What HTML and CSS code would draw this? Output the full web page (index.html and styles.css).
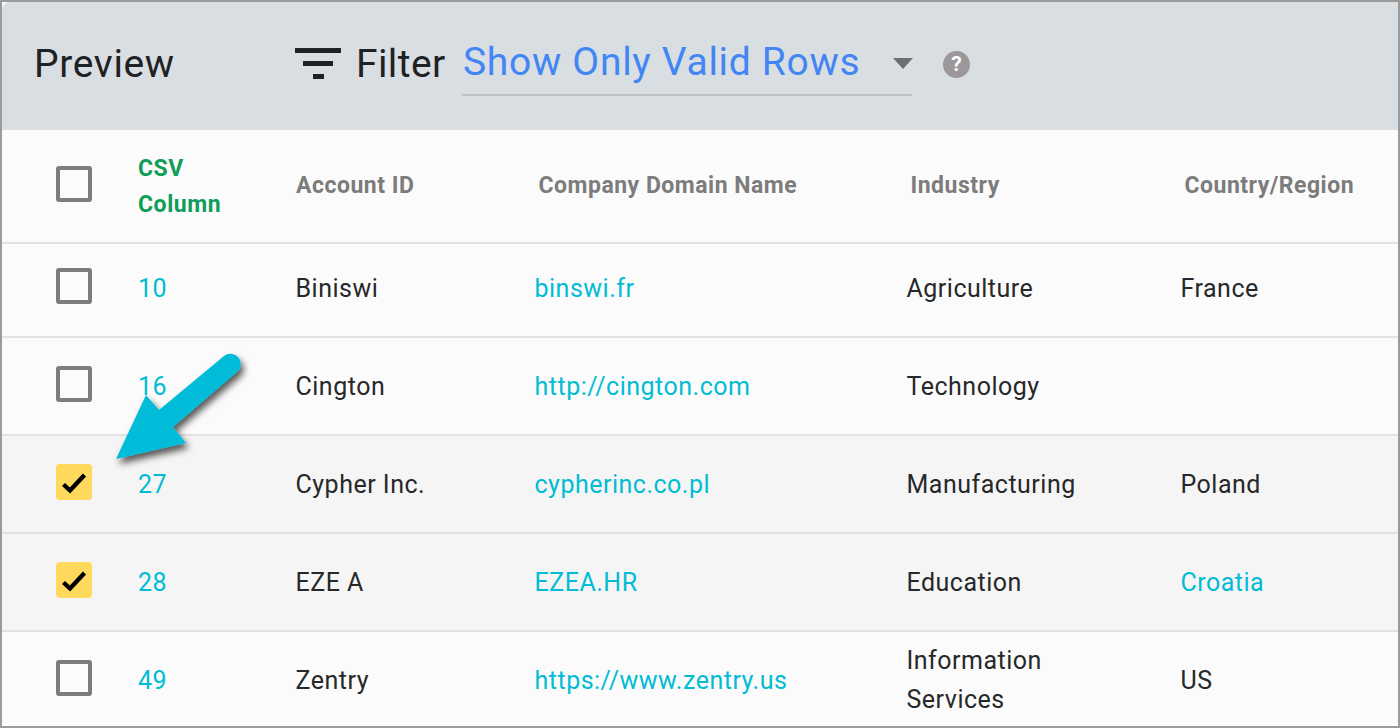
FILE: index.html
```html
<!DOCTYPE html>
<html lang="en">
<head>
<meta charset="utf-8">
<title>Preview</title>
<link rel="stylesheet" href="styles.css">
</head>
<body>
<div class="frame">
  <header class="toolbar">
    <h1 class="title">Preview</h1>
    <svg class="filter-icon" viewBox="0 0 46 32" aria-hidden="true"><path d="M0 0h46v5H0zM8 13h30v5H8zM18 26h11v5H18z"/></svg>
    <span class="filter-label">Filter</span>
    <div class="select">
      <span class="select-value">Show Only Valid Rows</span>
      <span class="caret"></span>
    </div>
    <span class="help">?</span>
  </header>
  <div class="table">
    <div class="row head">
      <div class="cell"><span class="box"></span></div>
      <div class="cell csv">CSV<br>Column</div>
      <div class="cell th first">Account ID</div>
      <div class="cell th">Company Domain Name</div>
      <div class="cell th">Industry</div>
      <div class="cell th">Country/Region</div>
    </div>
    <div class="row r1">
      <div class="cell"><span class="box"></span></div>
      <div class="cell link">10</div>
      <div class="cell">Biniswi</div>
      <div class="cell link">binswi.fr</div>
      <div class="cell">Agriculture</div>
      <div class="cell">France</div>
    </div>
    <div class="row r2">
      <div class="cell"><span class="box"></span></div>
      <div class="cell link">16</div>
      <div class="cell">Cington</div>
      <div class="cell link">http://cington.com</div>
      <div class="cell">Technology</div>
      <div class="cell"></div>
    </div>
    <div class="row r2 selected">
      <div class="cell"><span class="box checked"><svg viewBox="0 0 36 36" aria-hidden="true"><path d="M7.500 20.500l6.500 6L28.500 11"/></svg></span></div>
      <div class="cell link">27</div>
      <div class="cell">Cypher Inc.</div>
      <div class="cell link">cypherinc.co.pl</div>
      <div class="cell">Manufacturing</div>
      <div class="cell">Poland</div>
    </div>
    <div class="row r2 selected">
      <div class="cell"><span class="box checked"><svg viewBox="0 0 36 36" aria-hidden="true"><path d="M7.500 20.500l6.500 6L28.500 11"/></svg></span></div>
      <div class="cell link">28</div>
      <div class="cell">EZE A</div>
      <div class="cell link">EZEA.HR</div>
      <div class="cell">Education</div>
      <div class="cell link">Croatia</div>
    </div>
    <div class="row r3">
      <div class="cell"><span class="box"></span></div>
      <div class="cell link">49</div>
      <div class="cell">Zentry</div>
      <div class="cell link">https://www.zentry.us</div>
      <div class="cell wrap">Information Services</div>
      <div class="cell">US</div>
    </div>
  </div>
  <svg class="arrow" viewBox="0 0 1400 728" aria-hidden="true">
    <defs><filter id="sh" x="-30%" y="-30%" width="170%" height="170%"><feDropShadow dx="3" dy="5" stdDeviation="3.500" flood-color="#000" flood-opacity="0.65"/></filter></defs>
    <path class="arrow-shape" d="M116 459L146 395L159 410L224 356A10 10 0 0 1 237 372L173 427L186 443Z"/>
  </svg>
</div>
</body>
</html>
```
FILE: styles.css
```css
* { box-sizing: border-box; }
html, body { margin: 0; padding: 0; }
body {
  width: 1400px;
  height: 728px;
  overflow: hidden;
  font-family: Roboto, "Liberation Sans", sans-serif;
  background: #fff;
}
.frame {
  position: relative;
  width: 1400px;
  height: 728px;
  border: 2px solid #9b9b9b;
  background: #fbfbfb;
  overflow: hidden;
}
.toolbar {
  display: flex;
  align-items: flex-start;
  height: 128px;
  background: #d9dee2;
  border-top-left-radius: 8px;
  color: #1f2225;
}
.title {
  margin: 39px 0 0 32px;
  width: 261px;
  font-size: 39px;
  line-height: 46px;
  font-weight: 400;
  letter-spacing: 0.65px;
}
.filter-icon {
  width: 46px;
  height: 32px;
  margin-top: 46px;
  fill: #1f2225;
}
.filter-label {
  margin: 39px 0 0 15px;
  width: 106px;
  font-size: 39px;
  line-height: 46px;
  letter-spacing: 0.4px;
}
.select {
  display: flex;
  justify-content: space-between;
  width: 450px;
  height: 66px;
  margin-top: 28px;
  padding: 9px 0 0 1px;
  border-bottom: 2px solid #bcc1c5;
}
.select-value {
  font-size: 39px;
  line-height: 46px;
  letter-spacing: 0.7px;
  color: #4285f4;
}
.caret {
  width: 0;
  height: 0;
  margin: 19px -1px 0 0;
  border-left: 10.500px solid transparent;
  border-right: 10.500px solid transparent;
  border-top: 11px solid #6d7072;
}
.help {
  width: 27px;
  height: 27px;
  margin: 49px 0 0 31px;
  border-radius: 50%;
  background: #9b979b;
  color: #fff;
  font-size: 21px;
  font-weight: 700;
  line-height: 27px;
  text-align: center;
}
.row {
  display: grid;
  grid-template-columns: 136px 157.500px 239px 372px 274px 217.500px;
  align-items: center;
  border-bottom: 2px solid #e2e2e2;
  font-size: 25px;
  letter-spacing: 0.5px;
  color: #26282a;
}
.head { height: 114px; }
.r1 { height: 94px; padding-bottom: 4px; }
.r2 { height: 98px; }
.r3 { height: 94px; padding-top: 2px; border-bottom: 0; }
.selected { background: #f5f5f5; }
.cell { line-height: 39px; white-space: nowrap; }
.wrap { white-space: normal; width: 180px; }
.box {
  display: block;
  width: 36px;
  height: 36px;
  margin: 0 0 4px 54px;
  border: 4px solid #7c7c7c;
  border-radius: 3px;
}
.checked {
  border: 0;
  border-radius: 4px;
  background: #ffd95c;
}
.checked svg {
  display: block;
  width: 36px;
  height: 36px;
  fill: none;
  stroke: #000;
  stroke-width: 4.400;
}
.link { color: #00bcd4; }
.csv {
  padding-top: 2px;
  font-size: 23px;
  line-height: 36px;
  font-weight: 700;
  letter-spacing: 0.55px;
  color: #0f9d58;
}
.th {
  padding: 0 0 2px 4px;
  font-size: 23px;
  font-weight: 700;
  letter-spacing: 0.5px;
  color: #7c7c7c;
}
.th.first { padding-left: 0.500px; }
.arrow {
  position: absolute;
  left: -2px;
  top: -2px;
  width: 1400px;
  height: 728px;
  pointer-events: none;
}
.arrow-shape {
  fill: #00bcd9;
  filter: url(#sh);
}
```
